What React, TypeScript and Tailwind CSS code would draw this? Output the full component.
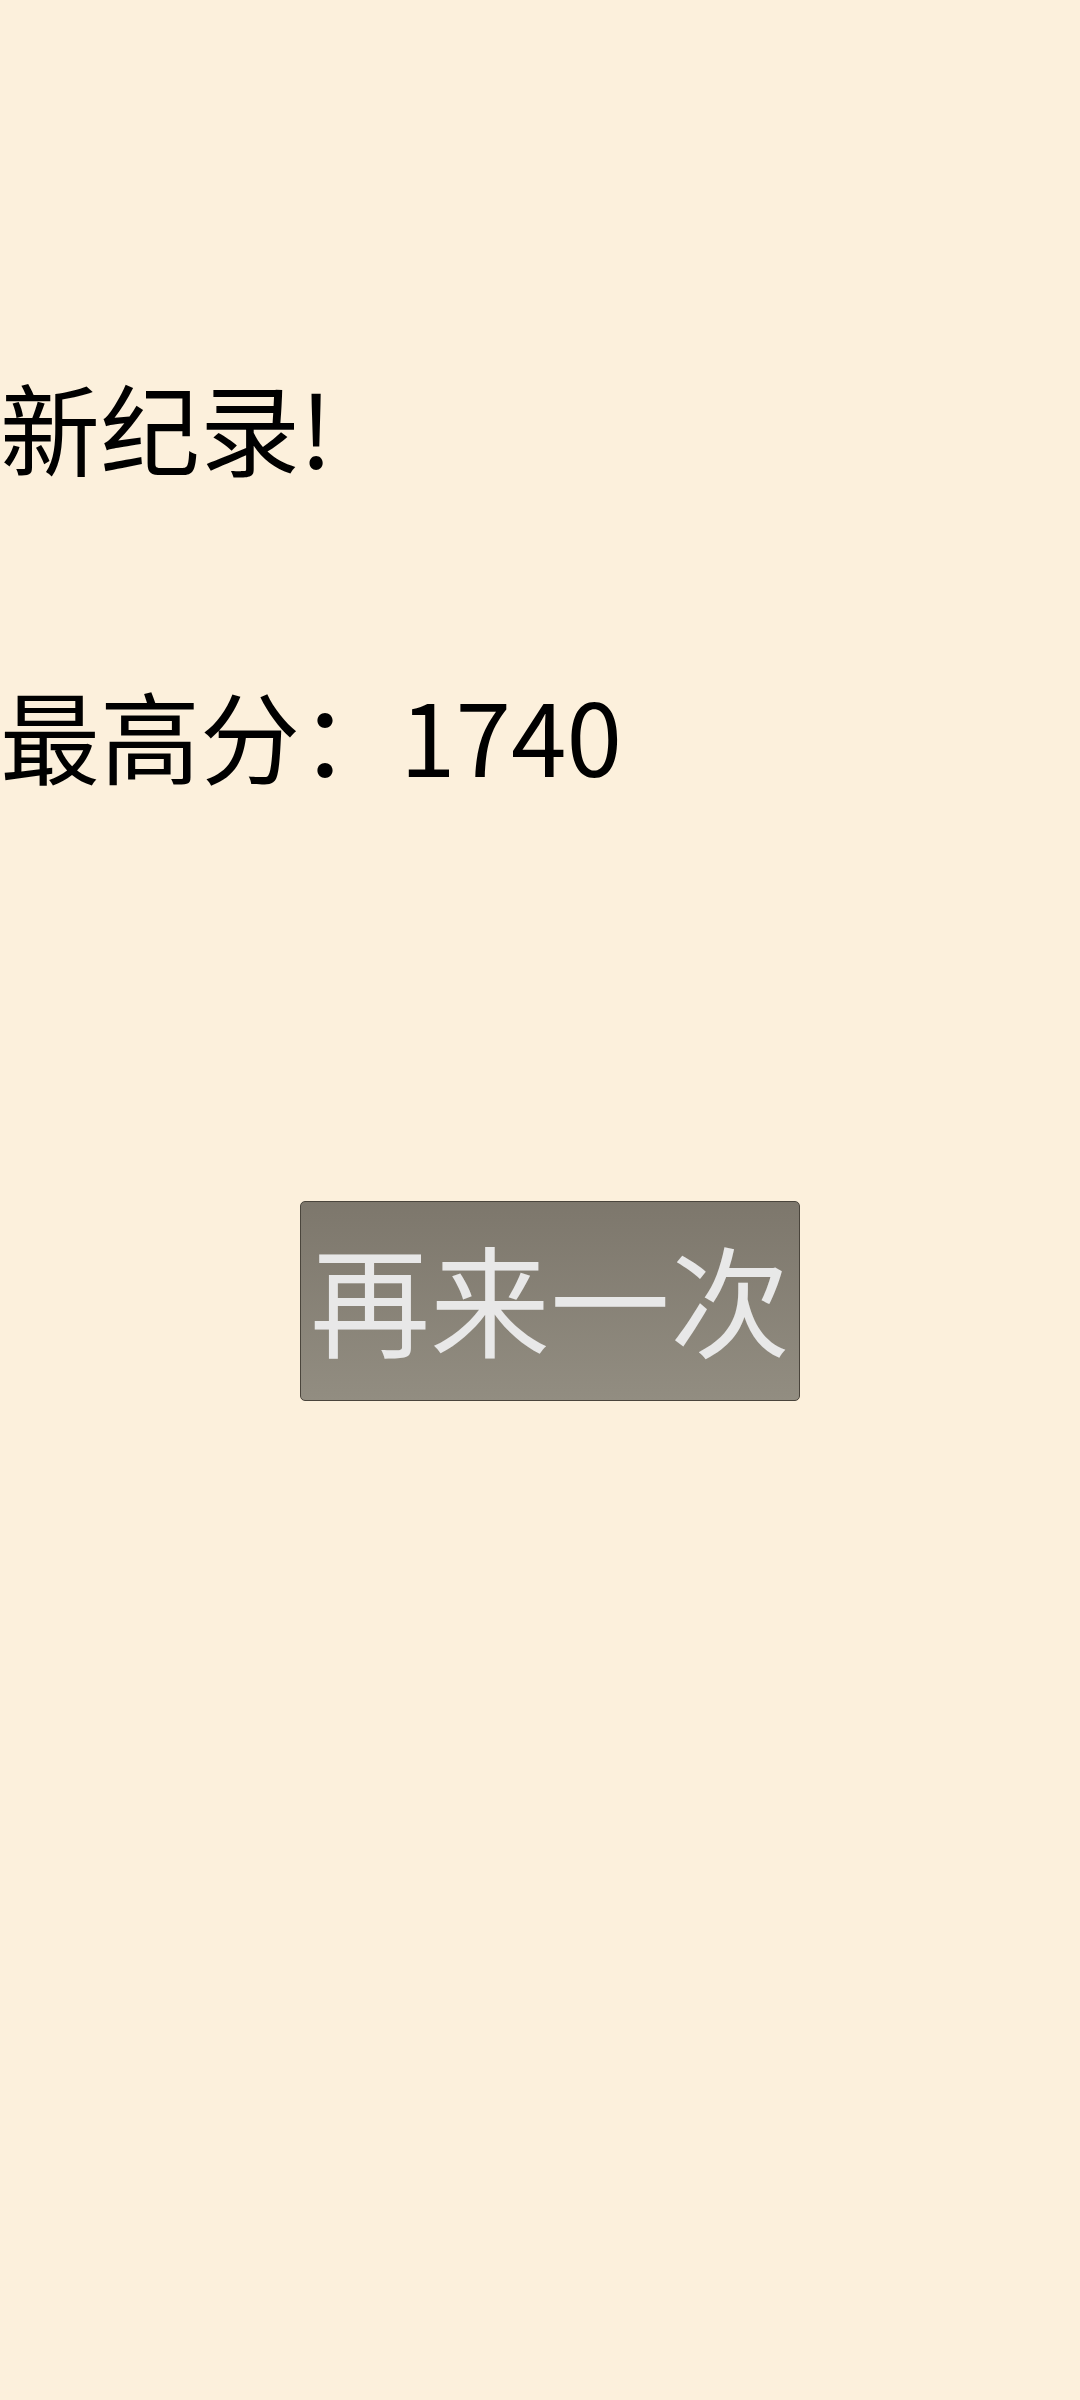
import React from 'react';

const cjk = { fontFamily: '"Noto Sans CJK SC", "Noto Sans", sans-serif' };

export default function App() {
  return (
    <div className="min-h-[2400px] w-[1080px] bg-[#fcf0dc] pt-[351px]" style={cjk}>
      <div className="text-[100px] leading-normal text-black">新纪录!</div>
      <div className="mt-[158px] text-[100px] leading-normal text-black">最高分：1740</div>
      <div className="mt-[392px] pl-[300px]">
        <button
          type="button"
          className="rounded-[5px] border border-[#4a453c] bg-gradient-to-b from-[#7d776c] to-[#928d81] px-[9px] pt-[5px] pb-[13px] text-[120px] leading-normal text-[#e8e8e8]"
          style={cjk}
        >
          再来一次
        </button>
      </div>
    </div>
  );
}
